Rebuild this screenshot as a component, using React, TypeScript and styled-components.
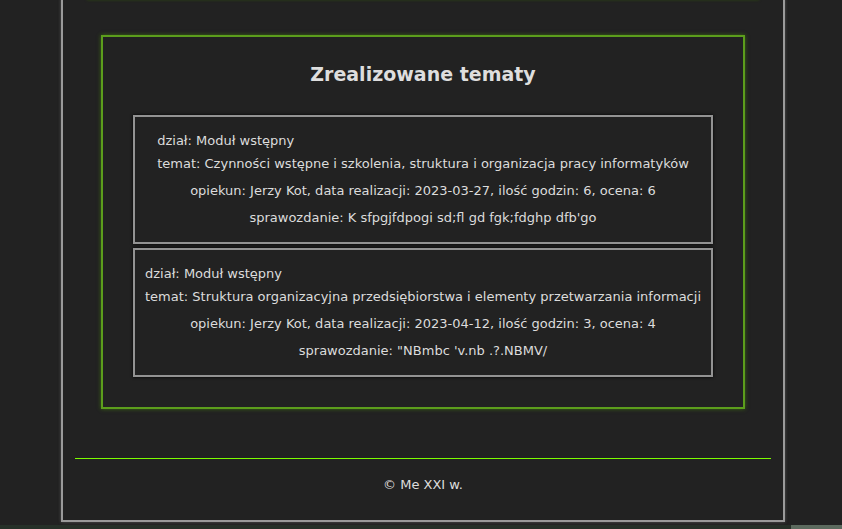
import React from "react";
import styled, { createGlobalStyle } from "styled-components";

const Global = createGlobalStyle`
  html, body { margin: 0; padding: 0; background: #222222; }
  body { font-family: "DejaVu Sans", Verdana, sans-serif; color: #dcdcdc; overflow: hidden; }
`;

const Page = styled.div`
  width: 724px;
  margin-left: 61px;
  margin-top: -2px;
  box-sizing: border-box;
  border: 2px solid #9a9a9a;
  border-top: none;
  box-shadow: 0 0 3px #555;
  padding: 0 12px;
  height: 524px;
  display: flex;
  flex-direction: column;
`;

const PrevSection = styled.div`
  margin: 0 12px;
  height: 0;
  border-bottom: 2px solid #3f6a12;
  box-shadow: 0 0 3px #2d4a10;
`;

const Section = styled.section`
  margin: 35px 26px 0;
  border: 2px solid #5c9e1c;
  box-shadow: 0 0 4px #3c6a12;
  padding: 0 30px 30px;
`;

const Title = styled.h2`
  margin: 25px 0 29px;
  text-align: center;
  font-size: 19px;
  line-height: 24px;
  font-weight: bold;
  color: #dedede;
`;

const List = styled.div`
  display: flex;
  flex-direction: column;
  gap: 4px;
`;

const Card = styled.div`
  border: 2px solid #939393;
  box-shadow: 0 0 3px #000;
  padding: 12px 0 11px;
  text-align: center;
  font-size: 13px;
`;

const Head = styled.div`
  display: inline-block;
  text-align: left;
`;

const HeadLine = styled.div`
  line-height: 23px;
  white-space: nowrap;
`;

const Line = styled.div`
  line-height: 27px;
  &:first-of-type { margin-top: 2px; }
`;

const Rule = styled.div`
  margin-top: 49px;
  height: 1px;
  background-color: #7cfc00;
`;

const Footer = styled.div`
  text-align: center;
  font-size: 13px;
  line-height: 16px;
  margin-top: 18px;
`;

const BottomStrip = styled.div`
  margin-top: 3px;
  height: 4px;
  display: grid;
  grid-template-columns: 791px 1fr;
`;

const StripPart = styled.div<{ $light?: boolean }>`
  background: ${(p) => (p.$light ? "#5c6a5e" : "#263028")};
`;

const topics = [
  {
    dzial: "Moduł wstępny",
    temat: "Czynności wstępne i szkolenia, struktura i organizacja pracy informatyków",
    opiekun: "Jerzy Kot",
    data: "2023-03-27",
    godziny: 6,
    ocena: 6,
    sprawozdanie: "K sfpgjfdpogi sd;fl gd fgk;fdghp dfb'go",
  },
  {
    dzial: "Moduł wstępny",
    temat: "Struktura organizacyjna przedsiębiorstwa i elementy przetwarzania informacji",
    opiekun: "Jerzy Kot",
    data: "2023-04-12",
    godziny: 3,
    ocena: 4,
    sprawozdanie: "\"NBmbc 'v.nb .?.NBMV/",
  },
];

export default function App() {
  return (
    <>
      <Global />
      <Page>
        <PrevSection />
        <Section>
          <Title>Zrealizowane tematy</Title>
          <List>
            {topics.map((t, i) => (
              <Card key={i}>
                <Head>
                  <HeadLine>dział: {t.dzial}</HeadLine>
                  <HeadLine>temat: {t.temat}</HeadLine>
                </Head>
                <div>
                  <Line>
                    opiekun: {t.opiekun}, data realizacji: {t.data}, ilość godzin: {t.godziny}, ocena: {t.ocena}
                  </Line>
                  <Line>sprawozdanie: {t.sprawozdanie}</Line>
                </div>
              </Card>
            ))}
          </List>
        </Section>
        <Rule />
        <Footer>© Me XXI w.</Footer>
      </Page>
      <BottomStrip>
        <StripPart />
        <StripPart $light />
      </BottomStrip>
    </>
  );
}
